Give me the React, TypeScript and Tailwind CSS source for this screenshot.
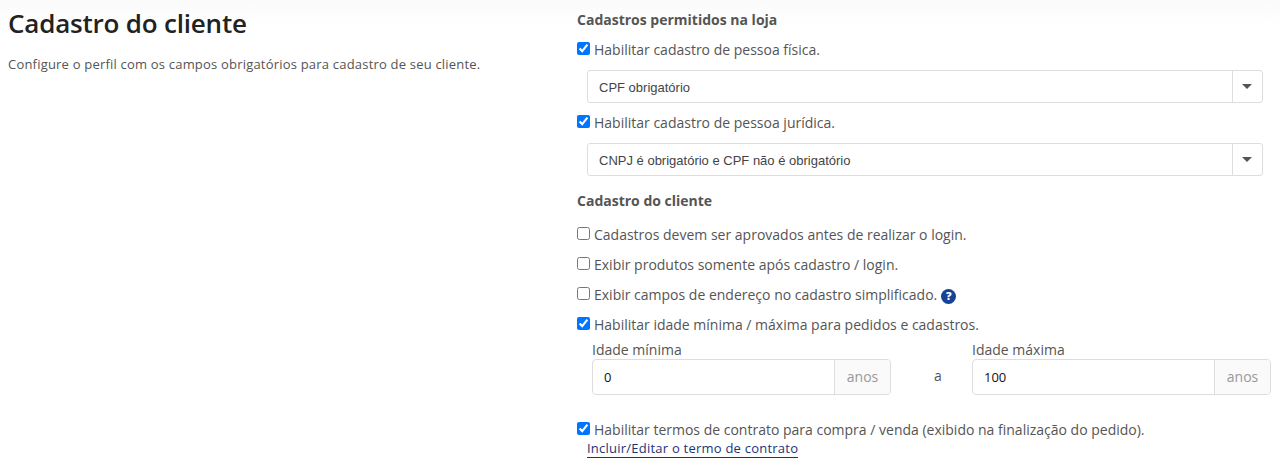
import type { FC, ReactNode } from "react";

type CheckRowProps = {
  checked?: boolean;
  children: ReactNode;
};

const CheckRow: FC<CheckRowProps> = ({ checked, children }) => {
  return (
    <label className="flex h-[30px] items-center pb-0.5 text-[14px] text-[#555]">
      <input
        type="checkbox"
        defaultChecked={checked}
        className="mr-1 mb-px size-[13px]"
      />
      {children}
    </label>
  );
};

const SelectBox: FC<{ value: string }> = ({ value }) => {
  return (
    <div className="ml-[10px] flex h-[33px] w-[676px] rounded-[3px] border border-[#ddd] bg-white">
      <span className="flex-1 pl-[11px] font-['Liberation_Sans',Arial,sans-serif] text-[13px] leading-[33px] text-[#444]">
        {value}
      </span>
      <span className="flex w-[30px] items-center justify-center border-l border-[#ddd] pr-px">
        <span className="border-x-5 border-t-5 border-x-transparent border-t-[#555]" />
      </span>
    </div>
  );
};

const AgeField: FC<{ label: string; value: string }> = ({ label, value }) => {
  return (
    <div className="w-[299px]">
      <div className="h-5 text-[14px] leading-[22px] text-[#555]">{label}</div>
      <div className="flex h-9 rounded-[4px] border border-[#ddd]">
        <input
          type="text"
          defaultValue={value}
          className="w-[241px] pt-0.5 pl-[11px] text-[13px] text-[#111]"
        />
        <span className="flex flex-1 items-center justify-center rounded-r-[3px] border-l border-[#ddd] bg-[#fafafa] pb-0.5 text-[14px] text-[#999]">
          anos
        </span>
      </div>
    </div>
  );
};

export default function App() {
  return (
    <main className="flex h-[467px] w-[1280px] overflow-hidden bg-white bg-linear-to-b from-[#fbfbfb] to-white to-[30px] font-['Open_Sans',sans-serif]">
      <section className="w-[577px] pl-2">
        <h1 className="pt-[5px] text-[26px] leading-9 font-semibold tracking-[-0.2px] text-[#222]">
          Cadastro do cliente
        </h1>
        <p className="mt-[13px] text-[13px] leading-5 tracking-[0.2px] text-[#555]">
          Configure o perfil com os campos obrigatórios para cadastro de seu cliente.
        </p>
      </section>
      <section className="flex-1">
        <h2 className="mt-[10px] mb-[5px] text-[14px] leading-5 font-bold text-[#555]">
          Cadastros permitidos na loja
        </h2>
        <CheckRow checked>Habilitar cadastro de pessoa física.</CheckRow>
        <div className="py-[5px]">
          <SelectBox value="CPF obrigatório" />
        </div>
        <CheckRow checked>Habilitar cadastro de pessoa jurídica.</CheckRow>
        <div className="pt-[5px]">
          <SelectBox value="CNPJ é obrigatório e CPF não é obrigatório" />
        </div>
        <h2 className="mt-[15px] mb-[9px] text-[14px] leading-5 font-bold text-[#555]">
          Cadastro do cliente
        </h2>
        <CheckRow>Cadastros devem ser aprovados antes de realizar o login.</CheckRow>
        <CheckRow>Exibir produtos somente após cadastro / login.</CheckRow>
        <CheckRow>
          Exibir campos de endereço no cadastro simplificado.
          <span className="mt-[5px] ml-1 flex size-[15px] items-center justify-center rounded-full bg-[#174397] text-[11px] font-extrabold text-white">
            ?
          </span>
        </CheckRow>
        <CheckRow checked>Habilitar idade mínima / máxima para pedidos e cadastros.</CheckRow>
        <div className="-mt-px ml-[15px] flex">
          <AgeField label="Idade mínima" value="0" />
          <span className="w-[81px] pt-[27px] pl-[43px] text-[14px] leading-5 text-[#555]">a</span>
          <AgeField label="Idade máxima" value="100" />
        </div>
        <div className="mt-5">
          <CheckRow checked>
            Habilitar termos de contrato para compra / venda (exibido na finalização do pedido).
          </CheckRow>
        </div>
        <a
          href="#"
          className="-mt-[5px] ml-[10px] block w-fit border-b border-[#1a3478] text-[13px] leading-[17px] tracking-[0.23px] text-[#1a3478]"
        >
          Incluir/Editar o termo de contrato
        </a>
      </section>
    </main>
  );
}
